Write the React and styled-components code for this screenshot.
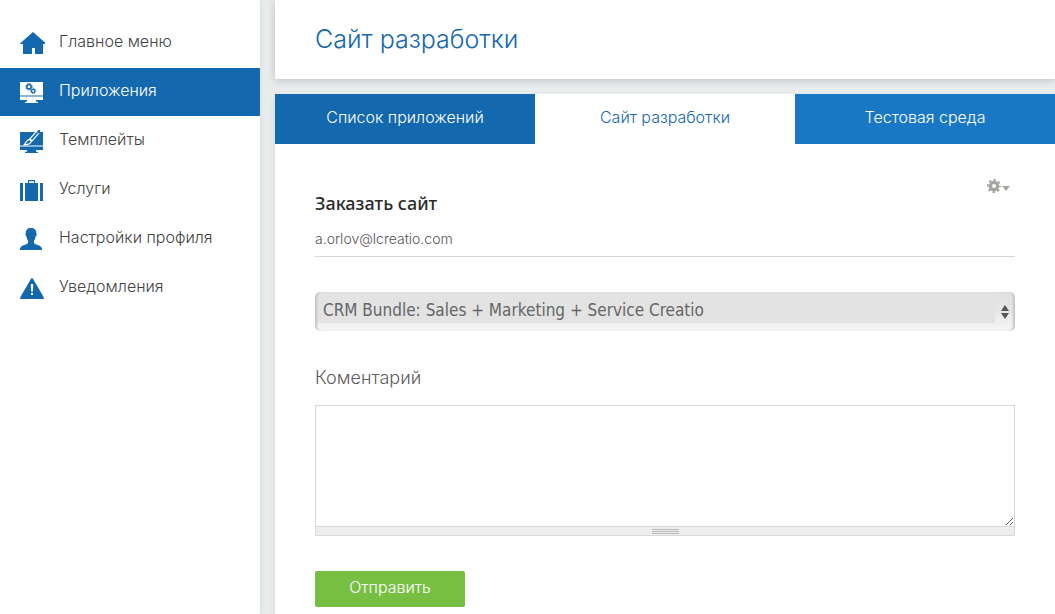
import React from "react";
import styled, { createGlobalStyle } from "styled-components";

const blue = "#1468ad";

const GlobalStyle = createGlobalStyle`
  * { box-sizing: border-box; }
  body {
    margin: 0;
    background: #e9eced;
    color: #444;
    font-family: Inter, "Liberation Sans", sans-serif;
    font-weight: 300;
    font-size: 16px;
  }
`;

const Page = styled.div`
  display: flex;
  gap: 15px;
  min-height: 100vh;
`;

const Sidebar = styled.nav`
  flex: 0 0 260px;
  padding-top: 19px;
  background: #fff;
  box-shadow: 0 0 6px rgba(0, 0, 0, 0.08);
`;

const Menu = styled.ul`
  display: flex;
  flex-direction: column;
  gap: 1px;
  margin: 0;
  padding: 0;
  list-style: none;
`;

const MenuLink = styled.a`
  display: flex;
  align-items: center;
  gap: 14px;
  height: 48px;
  padding: 0 20px 0 19px;
  color: ${(p) => (p.$active ? "#fff" : "#444")};
  background: ${(p) => (p.$active ? blue : "transparent")};
  line-height: 20px;
  text-decoration: none;

  svg {
    flex: none;
    color: ${(p) => (p.$active ? "#fff" : blue)};
    --hole: ${(p) => (p.$active ? blue : "#fff")};
  }
  span { padding-bottom: 4px; }
`;

const Main = styled.main`
  flex: 1;
  min-width: 0;
  display: flex;
  flex-direction: column;
  gap: 15px;
`;

const Header = styled.header`
  padding: 19px 40px 20px;
  background: #fff;
  box-shadow: 0 1px 8px rgba(0, 0, 0, 0.2);
`;

const Title = styled.h1`
  margin: 0;
  color: ${blue};
  font-size: 25px;
  font-weight: 300;
  line-height: 40px;
`;

const Panel = styled.section`
  flex: 1;
  background: #fff;
  box-shadow: 0 3px 6px rgba(0, 0, 0, 0.1);
`;

const Tabs = styled.div`
  display: flex;
`;

const Tab = styled.button`
  flex: 1;
  height: 50px;
  padding: 0 0 4px;
  border: 0;
  background: ${(p) => p.$bg};
  color: ${(p) => (p.$active ? blue : "#fff")};
  font: inherit;
  cursor: pointer;
`;

const Form = styled.form`
  display: flex;
  flex-direction: column;
  padding: 32px 40px 7px;
`;

const FormHead = styled.div`
  display: flex;
  justify-content: space-between;
  align-items: flex-start;
  height: 44px;
`;

const FormTitle = styled.label`
  padding-top: 15px;
  color: #2b2b2b;
  font-family: "Noto Sans", sans-serif;
  font-size: 18px;
  font-weight: 500;
  line-height: 24px;
`;

const SettingsButton = styled.button`
  display: flex;
  padding: 2px 4px 0 0;
  border: 0;
  background: none;
  cursor: pointer;
`;

const EmailInput = styled.input`
  width: 100%;
  height: 37px;
  padding: 0;
  border: 0;
  border-bottom: 1px solid #d6d8d8;
  outline: 0;
  background: transparent;
  color: #555;
  font-family: inherit;
  font-size: 14px;
  font-weight: 300;
`;

const SelectBox = styled.div`
  position: relative;
  margin-top: 35px;
`;

const Select = styled.select`
  display: block;
  width: 100%;
  height: 39px;
  padding: 0 24px 4px 8px;
  border: 0;
  border-radius: 5px;
  appearance: none;
  background:
    linear-gradient(#e3e3e3, #e3e3e3) left top / calc(100% - 20px) 31px no-repeat,
    linear-gradient(#e0e0e0, #e6e6e6 50%, #f7f7f7);
  box-shadow: inset 3px 0 2px -1px #c6c6c6, inset -3px 0 2px -1px #c6c6c6;
  color: #666;
  font: 400 17px/24px "DejaVu Sans Condensed", "DejaVu Sans", sans-serif;
`;

const Arrows = styled.svg`
  position: absolute;
  top: 13px;
  right: 6px;
  pointer-events: none;
`;

const CommentLabel = styled.label`
  margin: 34px 0 15px;
  color: #5c5c5c;
  font-size: 18px;
  line-height: 25px;
`;

const Comment = styled.textarea`
  display: block;
  width: 100%;
  height: 122px;
  padding: 8px;
  border: 1px solid #d6d8d8;
  outline: 0;
  background: #fff;
  font: inherit;
  resize: vertical;
`;

const Grip = styled.div`
  display: flex;
  justify-content: center;
  height: 9px;
  padding: 2px 0 0;
  border: 1px solid #d9dada;
  border-top: 0;
  background: #eee;
`;

const Submit = styled.button`
  align-self: flex-start;
  width: 150px;
  height: 36px;
  margin-top: 35px;
  padding: 0 0 4px;
  border: 0;
  border-radius: 2px;
  background: #77bf43;
  color: #fff;
  font: inherit;
  cursor: pointer;
`;

const Icon = ({ children }) => (
  <svg width="26" height="26" viewBox="0 0 26 26" fill="currentColor" aria-hidden="true">
    {children}
  </svg>
);

const HomeIcon = () => (
  <Icon>
    <path d="M14 2 27 13.5V14H24V24H16V18H13V24H4V14H1V13.5Z" />
  </Icon>
);

const Monitor = () => (
  <>
    <path d="M1 3H24V16H1Z" />
    <path d="M1 16H24V18H1Z" opacity=".5" />
    <path d="M1 18H24V21H17V22.5L19 23V24H6V23L8 22.5V21H1Z" />
  </>
);

const AppsIcon = () => (
  <Icon>
    <Monitor />
    <g fill="none" style={{ stroke: "var(--hole)" }}>
      <circle cx="10" cy="7.8" r="2.2" strokeWidth="1.5" />
      <circle cx="10" cy="7.8" r="3.3" strokeWidth="1" strokeDasharray="1.3 1.3" />
      <circle cx="14.2" cy="12" r="1.7" strokeWidth="1.3" />
      <circle cx="14.2" cy="12" r="2.6" strokeWidth=".9" strokeDasharray="1 1" />
    </g>
  </Icon>
);

const TemplatesIcon = () => (
  <Icon>
    <g transform="translate(0 1)">
      <Monitor />
      <path
        d="M17.6 2.4 19.8 4.2 13.2 11.8 10.8 9.8Z M10.2 10.4 12.4 12.3C11.6 14.6 8.5 16 5 16C6.8 14.3 7.2 11.4 10.2 10.4Z"
        strokeWidth="1.2"
        strokeLinejoin="round"
        style={{ stroke: "var(--hole)" }}
      />
      <path d="M17.6 3 19.4 1H21.2V2.5L19.4 4.6Z" />
    </g>
  </Icon>
);

const ServicesIcon = () => (
  <Icon>
    <path d="M1 6H4V24H1Z M21 6H24V24H21Z M6 6H9V3H16V6H19V24H6Z M10 4.3V6H15V4.3Z" fillRule="evenodd" />
  </Icon>
);

const ProfileIcon = () => (
  <Icon>
    <path
      transform="translate(0 2)"
      d="M12 0C8.5 0 6.6 2.1 6.8 5C6.1 5.8 6.6 8 7.6 8.8C7.8 10.5 8.3 12 9 12.8V15C8 17 1 17 1 21V22H23V21C23 17 16 17 15 15V12.8C15.8 12 16.3 10.5 16.5 8.8C17.7 8 18 5.8 17.3 5C17.5 2.1 15.5 0 12 0Z"
    />
  </Icon>
);

const AlertIcon = () => (
  <Icon>
    <path d="M13 4 24 23H2Z" stroke="currentColor" strokeWidth="2" strokeLinejoin="round" />
    <path d="M11.8 9H14.2L13.9 16.5H12.1Z M12 18H14V20H12Z" style={{ fill: "var(--hole)" }} />
  </Icon>
);

const items = [
  ["Главное меню", HomeIcon],
  ["Приложения", AppsIcon, true],
  ["Темплейты", TemplatesIcon],
  ["Услуги", ServicesIcon],
  ["Настройки профиля", ProfileIcon],
  ["Уведомления", AlertIcon],
];

export default function App() {
  return (
    <>
      <GlobalStyle />
      <Page>
        <Sidebar>
          <Menu>
            {items.map(([label, Glyph, active]) => (
              <li key={label}>
                <MenuLink href="#" $active={active}>
                  <Glyph />
                  <span>{label}</span>
                </MenuLink>
              </li>
            ))}
          </Menu>
        </Sidebar>
        <Main>
          <Header>
            <Title>Сайт разработки</Title>
          </Header>
          <Panel>
            <Tabs>
              <Tab type="button" $bg={blue}>Список приложений</Tab>
              <Tab type="button" $bg="#fff" $active>Сайт разработки</Tab>
              <Tab type="button" $bg="#1978c5">Тестовая среда</Tab>
            </Tabs>
            <Form>
              <FormHead>
                <FormTitle htmlFor="email">Заказать сайт</FormTitle>
                <SettingsButton type="button" aria-label="Настройки">
                  <svg width="24" height="16" viewBox="0 0 24 16" fill="#a5a5a0">
                    <g fill="none" stroke="#a5a5a0">
                      <circle cx="7" cy="8" r="3.6" strokeWidth="3.2" />
                      <circle cx="7" cy="8" r="6" strokeWidth="2" strokeDasharray="2.4 2.312" strokeDashoffset="1.2" />
                    </g>
                    <path d="M15 8H23L19 13Z" />
                  </svg>
                </SettingsButton>
              </FormHead>
              <EmailInput id="email" defaultValue="a.orlov@lcreatio.com" />
              <SelectBox>
                <Select aria-label="Продукт">
                  <option>CRM Bundle: Sales + Marketing + Service Creatio</option>
                </Select>
                <Arrows width="8" height="14" viewBox="0 0 8 14" fill="#555">
                  <path d="M4 0 8 6H0Z M0 8H8L4 14Z" />
                </Arrows>
              </SelectBox>
              <CommentLabel htmlFor="comment">Коментарий</CommentLabel>
              <Comment id="comment" />
              <Grip>
                <svg width="27" height="5" viewBox="0 0 27 5" fill="#b9b9b9">
                  <path d="M0 0H27V1H0Z M0 2H27V3H0Z M0 4H27V5H0Z" />
                </svg>
              </Grip>
              <Submit type="submit">Отправить</Submit>
            </Form>
          </Panel>
        </Main>
      </Page>
    </>
  );
}
